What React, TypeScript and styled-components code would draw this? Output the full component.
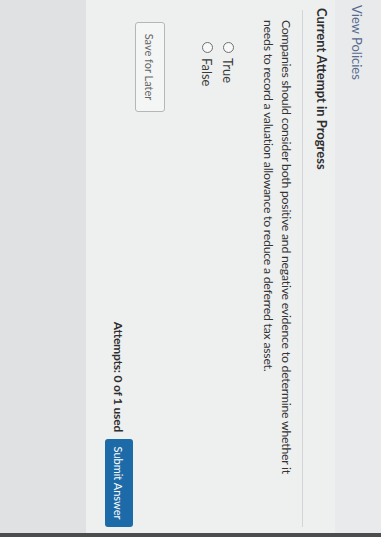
import styled, { createGlobalStyle } from "styled-components";

const GlobalStyle = createGlobalStyle`
  html, body {
    margin: 0;
    padding: 0;
    overflow: hidden;
    background: #e2e4e5;
  }
  * {
    box-sizing: border-box;
  }
`;

export default function App() {
  return (
    <>
      <GlobalStyle />
      <Viewport>
        <Screen>
          <TopBar>
            <PolicyLink href="#">View Policies</PolicyLink>
          </TopBar>
          <Card>
            <Heading>Current Attempt in Progress</Heading>
            <Divider />
            <Question>
              Companies should consider both positive and negative evidence to
              determine whether it needs to record a valuation allowance to
              reduce a deferred tax asset.
            </Question>
            <Choices>
              {["True", "False"].map((label) => (
                <Choice key={label}>
                  <RadioCircle />
                  <span>{label}</span>
                </Choice>
              ))}
            </Choices>
            <SaveButton>Save for Later</SaveButton>
            <Footer>
              <Attempts>Attempts: 0 of 1 used</Attempts>
              <SubmitButton>Submit Answer</SubmitButton>
            </Footer>
          </Card>
          <Below />
        </Screen>
      </Viewport>
    </>
  );
}

const Viewport = styled.div`
  width: 381px;
  height: 537px;
  overflow: hidden;
  background: #e2e4e5;
`;

/* the photo is turned a quarter clockwise */
const Screen = styled.div`
  width: 537px;
  height: 381px;
  transform-origin: 0 0;
  transform: translateX(381px) rotate(90deg);
  display: flex;
  flex-direction: column;
  border-right: 4px solid #4a4c4e;
  font-family: Lato, "Liberation Sans", sans-serif;
  color: #333;
`;

const TopBar = styled.div`
  height: 46px;
  flex-shrink: 0;
  padding: 13px 0 0 5px;
  background: #e8eaeb;
`;

const PolicyLink = styled.a`
  font-size: 13px;
  line-height: 16px;
  color: #566c8e;
  text-decoration: none;
`;

const Card = styled.div`
  display: flex;
  flex-direction: column;
  padding: 5px 6px 19px 0;
  background: #eef0f0;
`;

const Heading = styled.div`
  padding-left: 8px;
  font-size: 13px;
  font-weight: 700;
  line-height: 16px;
  color: #2e2e2e;
`;

const Divider = styled.div`
  margin: 11px 0 0 10px;
  border-top: 1px solid #d3d5d6;
`;

const Question = styled.p`
  margin: 7px 0 0 20px;
  max-width: 470px;
  font-size: 12.3px;
  letter-spacing: -0.25px;
  line-height: 18px;
  color: #333;
`;

const Choices = styled.div`
  display: flex;
  flex-direction: column;
  margin: 20px 0 0 42px;
`;

const Choice = styled.label`
  display: flex;
  align-items: center;
  gap: 5px;
  height: 21px;
  font-size: 13px;
  color: #3a3a3a;
`;

const RadioCircle = styled.span`
  width: 11px;
  height: 11px;
  border: 1px solid #6d6f71;
  border-radius: 50%;
  background: #f8f8f8;
`;

const SaveButton = styled.button`
  align-self: flex-start;
  margin: 32px 0 0 22px;
  width: 90px;
  height: 30px;
  padding: 0;
  border: 1px solid #b4b6b8;
  border-radius: 3px;
  background: #f4f5f5;
  font-family: inherit;
  font-size: 11px;
  color: #666;
`;

const Footer = styled.div`
  display: flex;
  justify-content: flex-end;
  align-items: center;
  gap: 7px;
  margin-top: 2px;
`;

const Attempts = styled.span`
  font-size: 12px;
  font-weight: 700;
  letter-spacing: -0.2px;
  color: #2e2e2e;
`;

const SubmitButton = styled.button`
  width: 88px;
  height: 28px;
  padding: 0;
  border: none;
  border-radius: 3px;
  background: #1d6aa8;
  font-family: inherit;
  font-size: 11px;
  color: #fff;
`;

const Below = styled.div`
  flex: 1;
  background: #dfe1e2;
`;
